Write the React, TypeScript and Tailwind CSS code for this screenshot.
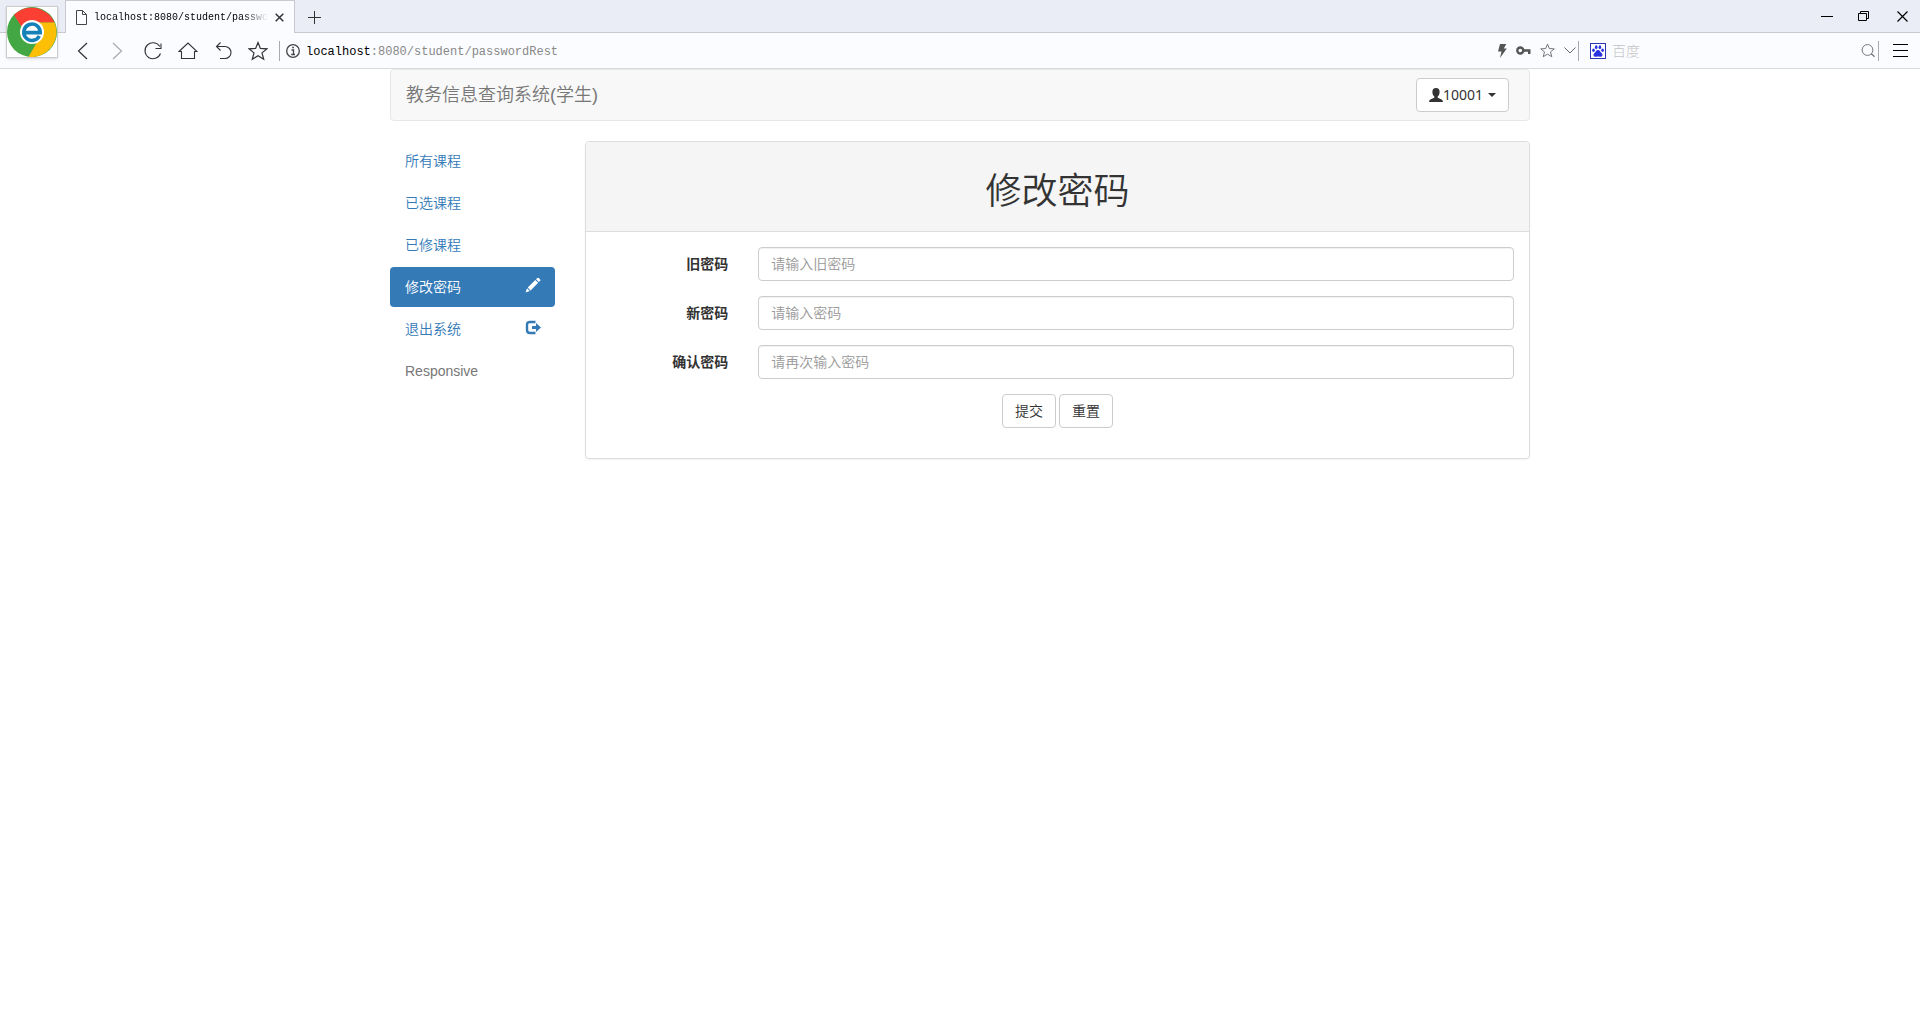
import type { ReactNode, SVGProps } from 'react';

const STROKE: SVGProps<SVGSVGElement> = {
  fill: 'none',
  stroke: 'currentColor',
  'aria-hidden': true,
};

function BrowserLogo() {
  return (
    <svg viewBox="0 0 50 50" className="size-[50px]" aria-hidden="true">
      <circle cx="25" cy="25" r="25" fill="#43a843" />
      <path d="M7 8 A25 25 0 0 1 47.5 15.5 L25 15.5 L16 22 Z" fill="#fb3f33" />
      <path d="M47.5 15.5 A25 25 0 0 1 21.5 49.8 L33 30 L31 15.5 Z" fill="#fdbf05" />
      <circle cx="25" cy="25" r="12" fill="#fff" />
      <path d="M32.3 29 A8.2 8.2 0 1 1 33.2 25.6 L18.5 25.6" fill="none" stroke="#1482b8" strokeWidth="3.6" />
    </svg>
  );
}

function PageIcon() {
  return (
    <svg {...STROKE} viewBox="0 0 11 15" className="h-[15px] w-[11px] shrink-0 text-[#444]">
      <path d="M.5 .5h6l4 4v10H.5z M6.500 .5v4h4" />
    </svg>
  );
}

function BackIcon() {
  return (
    <svg {...STROKE} viewBox="0 0 20 20" className="size-5">
      <path d="M14 2L5.500 10L14 18" strokeWidth="1.200" />
    </svg>
  );
}

function ForwardIcon() {
  return (
    <svg {...STROKE} viewBox="0 0 20 20" className="size-5 text-[#aaa]">
      <path d="M5 2L13.500 10L5 18" strokeWidth="1.200" />
    </svg>
  );
}

function ReloadIcon() {
  return (
    <svg {...STROKE} viewBox="0 0 20 20" className="size-5">
      <path d="M17.500 12.500A8 8 0 1 1 16.800 5.500M18 2.500V7.500H12.500" strokeWidth="1.100" />
    </svg>
  );
}

function HomeIcon() {
  return (
    <svg {...STROKE} viewBox="0 0 20 20" className="size-5">
      <path d="M1 10.500L10 2L19 10.500H16.500V17.500H3.500V10.500Z" strokeWidth="1.100" />
    </svg>
  );
}

function UndoIcon() {
  return (
    <svg {...STROKE} viewBox="0 0 20 20" className="size-5">
      <path d="M7.500 1.500L3.500 5.500L7.500 9.500M3.500 5.500H12A6 6 0 0 1 12 17.500H7" strokeWidth="1.100" />
    </svg>
  );
}

function StarIcon({ className }: { className: string }) {
  return (
    <svg {...STROKE} viewBox="0 0 20 20" className={className}>
      <path
        d="M10 1.500L12.400 7.400L19 7.800L14 11.900L15.700 18.300L10 14.800L4.300 18.300L6 11.900L1 7.800L7.600 7.400Z"
        strokeWidth="1.200"
      />
    </svg>
  );
}

function InfoIcon() {
  return (
    <svg {...STROKE} viewBox="0 0 14 14" className="size-3.5 shrink-0 text-[#444]">
      <circle cx="7" cy="7" r="6.300" strokeWidth="1.300" />
      <path d="M5.500 6H7.500V10.500M5.200 10.500H9" strokeWidth="1.300" />
      <path d="M6.200 3.500H7.900" strokeWidth="1.600" />
    </svg>
  );
}

function BoltIcon() {
  return (
    <svg viewBox="0 0 10 14" className="h-3.5 w-2.5" fill="#555" aria-hidden="true">
      <path d="M3 0H9.300L6.800 4.500H9.800L3 14L4.500 7.500H1Z" />
    </svg>
  );
}

function KeyIcon() {
  return (
    <svg viewBox="0 0 15 9" className="h-[9px] w-[15px]" aria-hidden="true">
      <circle cx="4.300" cy="4.500" r="3" fill="none" stroke="#555" strokeWidth="2.400" />
      <path d="M7.500 3.300H14.500V8H12V5.800H7.500Z" fill="#555" />
    </svg>
  );
}

function ChevronIcon() {
  return (
    <svg {...STROKE} viewBox="0 0 12 7" className="h-[7px] w-3 text-[#666]">
      <path d="M.5 .5L6 6L11.500 .5" />
    </svg>
  );
}

function PawIcon() {
  return (
    <svg viewBox="0 0 16 16" className="size-4 shrink-0" aria-hidden="true">
      <rect x=".5" y=".5" width="15" height="15" fill="#fff" stroke="#2b35b5" />
      <g fill="#2932e1">
        <ellipse cx="3.500" cy="7.300" rx="1.300" ry="1.700" />
        <ellipse cx="6.200" cy="4.200" rx="1.300" ry="1.900" />
        <ellipse cx="9.900" cy="4.200" rx="1.300" ry="1.900" />
        <ellipse cx="12.600" cy="7.300" rx="1.300" ry="1.700" />
        <path d="M8 7C6 7 5.800 9 4.300 10.200C2.800 11.500 3.500 13.800 5.500 13.800L8 13.500L10.500 13.800C12.500 13.800 13.200 11.500 11.700 10.200C10.200 9 10 7 8 7Z" />
      </g>
    </svg>
  );
}

function SearchIcon() {
  return (
    <svg {...STROKE} viewBox="0 0 14 14" className="size-3.5 text-[#777]">
      <circle cx="6.500" cy="6" r="5.400" />
      <path d="M10.300 9.800L13.500 12.800" strokeWidth="1.300" />
    </svg>
  );
}

function MenuIcon() {
  return (
    <svg {...STROKE} viewBox="0 0 15 13" className="h-[13px] w-[15px]">
      <path d="M0 .5H15M0 6.500H15M0 12.500H15" />
    </svg>
  );
}

function PencilIcon() {
  return (
    <svg viewBox="0 0 16 16" className="size-4" fill="currentColor" aria-hidden="true">
      <path d="M.5 15.500L2 11.300L4.800 14.100Z M2.700 10.500L10.300 2.900L13.200 5.800L5.600 13.400Z M11 2.200L12.300 .9Q13 .4 13.700 .9L15.200 2.400Q15.700 3.100 15.200 3.800L13.900 5.100Z" />
    </svg>
  );
}

function LogoutIcon() {
  return (
    <svg viewBox="0 0 16 16" className="size-4" aria-hidden="true">
      <path
        d="M10.500 3H5Q2 3 2 6V11Q2 14 5 14H10.500"
        fill="none"
        stroke="currentColor"
        strokeWidth="2.400"
      />
      <path d="M7 6.900H11V4L16 8.500L11 13V10.100H7Z" fill="currentColor" />
    </svg>
  );
}

function UserIcon() {
  return (
    <svg viewBox="0 0 14 14" className="size-3.5" fill="currentColor" aria-hidden="true">
      <path d="M7 0C4.600 0 3.300 1.500 3.400 4C3.400 6 4.200 7.500 5.300 8.500V9.700C4 10.500 .2 11.300 .2 13V14H13.800V13C13.800 11.300 10 10.500 8.700 9.700V8.500C9.800 7.500 10.600 6 10.600 4C10.700 1.500 9.400 0 7 0Z" />
    </svg>
  );
}

function ToolButton({ label, children }: { label: string; children: ReactNode }) {
  return (
    <button type="button" aria-label={label} className="flex h-full w-[35px] items-center justify-center">
      {children}
    </button>
  );
}

function BrowserBar() {
  return (
    <header className="relative text-[#333]">
      <div className="absolute top-1.5 left-1.5 border border-[#ccc] bg-white shadow">
        <BrowserLogo />
      </div>

      <div className="flex h-[33px] items-stretch bg-[#eaedf6]">
        <div className="w-[65px] border-b border-[#c9cad0]" />
        <div className="flex w-[230px] items-center justify-between border-x border-t border-[#c9cad0] bg-[#fbfcff] px-2.5">
          <PageIcon />
          <span className="mask-r-from-85% font-['Liberation_Mono',monospace] text-[10px] whitespace-nowrap text-black">
            localhost:8080/student/passwo
          </span>
          <button type="button" aria-label="关闭标签页">
            <svg {...STROKE} viewBox="0 0 9 9" className="size-[9px]">
              <path d="M.7 .7L8.300 8.300M8.300 .7L.7 8.300" strokeWidth="1.500" />
            </svg>
          </button>
        </div>
        <div className="flex flex-1 items-center justify-between border-b border-[#c9cad0]">
          <button type="button" aria-label="新建标签页" className="ml-[13px]">
            <svg {...STROKE} viewBox="0 0 13 13" className="mt-0.5 size-[13px]">
              <path d="M6.500 0V13M0 6.500H13" />
            </svg>
          </button>
          <div className="flex items-center gap-6 pr-3 text-black">
            <button type="button" aria-label="最小化">
              <svg {...STROKE} viewBox="0 0 13 13" className="size-[13px]">
                <path d="M1 6.500H13" />
              </svg>
            </button>
            <button type="button" aria-label="还原">
              <svg {...STROKE} viewBox="0 0 12 12" className="size-3">
                <path d="M1.500 3.500H9.500V10.500H1.500zM3.500 3.500V1.500H11.500V8.500H9.500" />
              </svg>
            </button>
            <button type="button" aria-label="关闭" className="ml-1">
              <svg {...STROKE} viewBox="0 0 11 11" className="size-[11px]">
                <path d="M.5 .5L10.500 10.500M10.500 .5L.5 10.500" strokeWidth="1.200" />
              </svg>
            </button>
          </div>
        </div>
      </div>

      <div className="flex h-9 items-center border-b border-[#d9dade] bg-[#fbfcff] pl-[65px]">
        <ToolButton label="后退"><BackIcon /></ToolButton>
        <ToolButton label="前进"><ForwardIcon /></ToolButton>
        <ToolButton label="刷新"><ReloadIcon /></ToolButton>
        <ToolButton label="主页"><HomeIcon /></ToolButton>
        <ToolButton label="恢复"><UndoIcon /></ToolButton>
        <ToolButton label="收藏"><StarIcon className="size-5" /></ToolButton>
        <div className="ml-1 h-5 w-px bg-[#aaa]" />
        <div className="ml-1.5 flex flex-1 items-center gap-1.5">
          <InfoIcon />
          <div
            role="textbox"
            aria-label="地址"
            className="pt-0.5 font-['Liberation_Mono',monospace] text-[12px] whitespace-nowrap text-[#888]"
          >
            <span className="text-black">localhost</span>:8080/student/passwordRest
          </div>
        </div>
        <div className="flex items-center gap-[9px]">
          <button type="button" aria-label="极速模式"><BoltIcon /></button>
          <button type="button" aria-label="密码"><KeyIcon /></button>
          <button type="button" aria-label="加入收藏" className="text-[#666]"><StarIcon className="size-[15px]" /></button>
          <button type="button" aria-label="更多"><ChevronIcon /></button>
        </div>
        <div className="ml-0.5 h-5 w-px bg-[#aaa]" />
        <div className="ml-[11px] flex w-[285px] items-center">
          <PawIcon />
          <input
            type="search"
            aria-label="搜索"
            placeholder="百度"
            className="ml-1.5 min-w-0 flex-1 font-['Noto_Sans_CJK_SC',sans-serif] text-[14px] font-light outline-none placeholder:text-[#c4c4c4]"
          />
          <button type="button" aria-label="开始搜索"><SearchIcon /></button>
        </div>
        <div className="ml-[3px] h-5 w-px bg-[#aaa]" />
        <button type="button" aria-label="菜单" className="mr-3 ml-3.5 text-black"><MenuIcon /></button>
      </div>
    </header>
  );
}

const LINKS: { text: string; active?: boolean; icon?: ReactNode }[] = [
  { text: '所有课程' },
  { text: '已选课程' },
  { text: '已修课程' },
  { text: '修改密码', active: true, icon: <PencilIcon /> },
  { text: '退出系统', icon: <LogoutIcon /> },
];

const FIELDS = [
  { id: 'old-password', label: '旧密码', placeholder: '请输入旧密码' },
  { id: 'new-password', label: '新密码', placeholder: '请输入密码' },
  { id: 'confirm-password', label: '确认密码', placeholder: '请再次输入密码' },
];

function Sidebar() {
  return (
    <nav className="w-1/6 px-[15px]">
      <ul className="flex flex-col gap-0.5">
        {LINKS.map((link) => (
          <li key={link.text}>
            <a
              href="#"
              aria-current={link.active ? 'page' : undefined}
              className={
                link.active
                  ? 'flex justify-between rounded bg-[#337ab7] py-2.5 pr-3.5 pl-[15px] text-white'
                  : 'flex justify-between rounded py-2.5 pr-3.5 pl-[15px] text-[#337ab7]'
              }
            >
              {link.text}
              {link.icon}
            </a>
          </li>
        ))}
        <li className="px-[15px] py-2.5 text-[#777]">Responsive</li>
      </ul>
    </nav>
  );
}

function PasswordPanel() {
  return (
    <div className="w-5/6 px-[15px]">
      <section className="rounded border border-[#ddd] bg-white shadow-xs">
        <div className="rounded-t-[3px] border-b border-[#ddd] bg-[#f5f5f5] px-[15px] pt-[30px] pb-5">
          <h1 className="text-center text-4xl leading-[39px]">修改密码</h1>
        </div>
        <form className="flex flex-col gap-[15px] pt-[15px] pb-[30px]" onSubmit={(e) => e.preventDefault()}>
          {FIELDS.map((field) => (
            <div key={field.id} className="flex">
              <label htmlFor={field.id} className="w-1/6 px-[15px] pt-[7px] text-right font-bold">
                {field.label}
              </label>
              <div className="w-5/6 px-[15px]">
                <input
                  id={field.id}
                  type="password"
                  placeholder={field.placeholder}
                  className="block h-[34px] w-full rounded border border-[#ccc] bg-white px-3 inset-shadow-2xs outline-none placeholder:text-[#999]"
                />
              </div>
            </div>
          ))}
          <div className="flex justify-center gap-[3px]">
            <button type="submit" className="h-[34px] rounded border border-[#ccc] bg-white px-3">
              提交
            </button>
            <button type="reset" className="h-[34px] rounded border border-[#ccc] bg-white px-3">
              重置
            </button>
          </div>
        </form>
      </section>
    </div>
  );
}

export default function App() {
  return (
    <div className="min-h-screen bg-white">
      <BrowserBar />
      <main className="mx-auto max-w-[1170px] px-[15px] font-['Liberation_Sans','Noto_Sans_CJK_SC',sans-serif] text-[14px] leading-5 font-[350] text-[#333]">
        <div className="mb-5 flex items-center justify-between rounded border border-[#e7e7e7] bg-[#f8f8f8] py-2 pr-5 pl-[15px]">
          <a href="#" className="text-lg leading-5 text-[#777]">
            教务信息查询系统(学生)
          </a>
          <button
            type="button"
            className="flex h-[34px] items-center rounded border border-[#ccc] bg-white px-3 font-['Noto_Sans',sans-serif] font-normal"
          >
            <UserIcon />
            10001
            <span className="ml-[5px] border-x-4 border-t-4 border-x-transparent border-t-[#333]" />
          </button>
        </div>
        <div className="-mx-[15px] flex">
          <Sidebar />
          <PasswordPanel />
        </div>
      </main>
    </div>
  );
}
